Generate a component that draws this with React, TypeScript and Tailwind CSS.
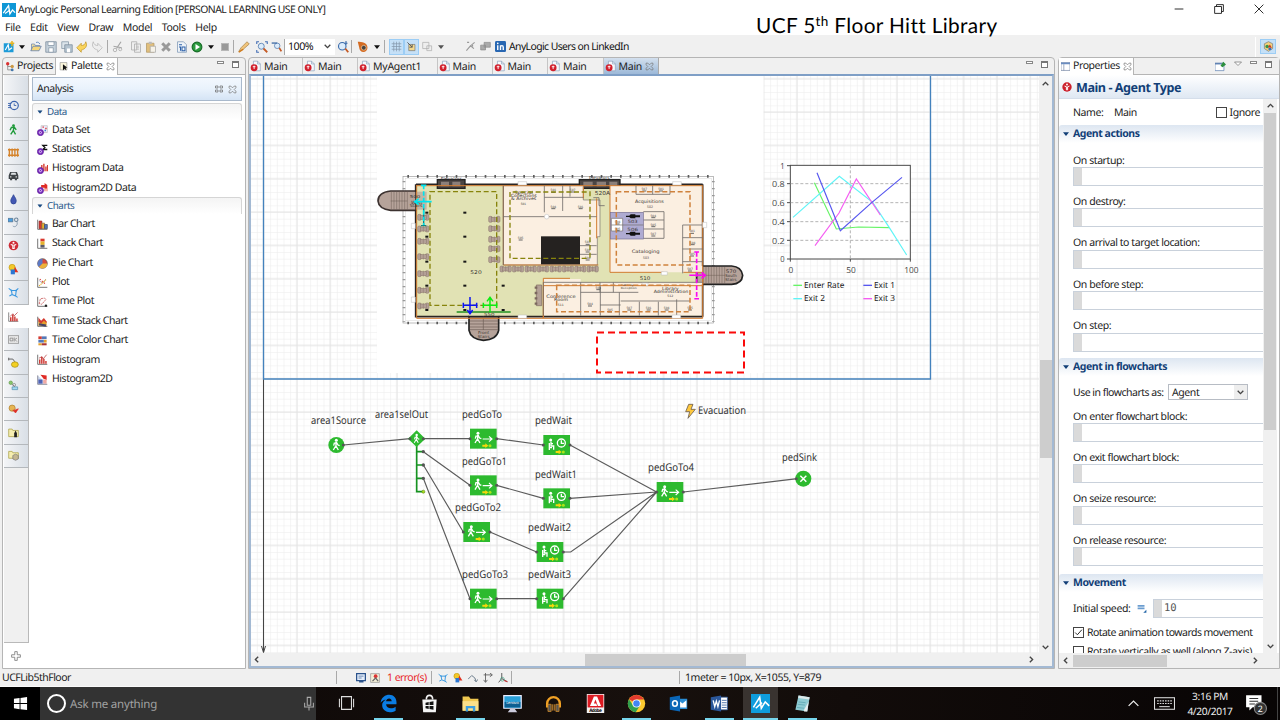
import React from "react";

type P = { children?: React.ReactNode; className?: string };

/* ---------- small drawings ---------- */
const Ic = ({ children, className = "w-[11px] h-[11px]" }: P) => (
  <svg viewBox="0 0 16 16" className={"shrink-0 " + className} fill="none">{children}</svg>
);

/* One line of interface text, nudged onto the row's baseline. */
const T = ({ children, className = "" }: P) => <span className={"block pt-[2px] whitespace-nowrap " + className}>{children}</span>;

const Logo = ({ className = "w-[14px] h-[14px]" }: P) => (
  <Ic className={className}>
    <rect width="16" height="16" fill="#0e97d6" />
    <path d="M1.500 11.500L7.500 3l1.500 9.500L12 8l3 3" stroke="#fff" strokeWidth="1.500" />
    <path d="M3.500 12L9 8" stroke="#fff" strokeWidth="1.300" />
  </Ic>
);

const CloseX = () => (
  <Ic className="w-[9px] h-[9px]">
    <path d="M2 2h3l3 3 3-3h3v3l-3 3 3 3v3h-3l-3-3-3 3H2v-3l3-3-3-3z" stroke="#777" strokeWidth="1.3" />
  </Ic>
);

const Err = () => (
  <Ic className="w-[10px] h-[10px]">
    <circle cx="8" cy="8" r="7.5" fill="#cc1f2b" />
    <circle cx="8" cy="4" r="1.5" fill="#fff" />
    <path d="M4 6.5l3 1v5h2v-5l3-1" stroke="#fff" strokeWidth="1.6" />
  </Ic>
);

const TabIcon = () => (
  <Ic className="w-[11px] h-[12px]">
    <path d="M5 1h6l4 4v10H5z" fill="#f4f8fc" stroke="#8da2ba" />
    <path d="M11 1v4h4" stroke="#8da2ba" />
    <circle cx="6" cy="10.5" r="5" fill="#d21f2c" />
    <path d="M6 7.5v5M4 9h4" stroke="#fff" strokeWidth="1.3" />
  </Ic>
);

const MinMax = () => (
  <div className="flex items-start gap-[8px]">
    <div className="w-[7px] h-[3px] border border-[#888] bg-white" />
    <div className="w-[7px] h-[7px] border border-[#777] border-t-2 bg-white" />
  </div>
);

const Caret = ({ className = "" }: P) => (
  <svg viewBox="0 0 8 5" className={"w-[6px] h-[4px] shrink-0 " + className}><path d="M0 0h8L4 5z" fill="currentColor" /></svg>
);

const Chev = ({ d }: { d: string }) => (
  <Ic className="w-[9px] h-[9px]"><path d={d} stroke="#444" strokeWidth="2.4" /></Ic>
);
const UP = "M3 11l5-5 5 5", DOWN = "M3 5l5 5 5-5", LEFT = "M11 3L6 8l5 5", RIGHT = "M5 3l5 5-5 5";

/* ---------- title, menu and tool bars ---------- */
const Sep = () => <div className="w-px h-[13px] bg-[#a9a9a9] shrink-0" />;

const B = ({ w, children, className = "" }: { w: string } & P) => (
  <div className={"flex items-center justify-center shrink-0 h-[16px] " + w + " " + className}>{children}</div>
);

const I12 = "w-[12px] h-[12px]";

function Toolbar() {
  return (
    <div className="h-[22px] bg-[#f0f0f0] flex items-center pl-[1px] pt-[1px] text-[#111]">
      <B w="w-[15px]"><Ic className={I12}><rect x="1" y="3" width="13" height="12" fill="#1d9bd8" /><path d="M3 12l4-7 1 7 4-3" stroke="#fff" strokeWidth="1.5" /><path d="M12 0v7M9 3h6" stroke="#e6b422" strokeWidth="2" /></Ic></B>
      <B w="w-[12px]"><Caret /></B>
      <B w="w-[15px]"><Ic className={I12}><path d="M2 13V4h4l1 2h6v2" fill="#f7e3a0" stroke="#6a86b0" /><path d="M1 13l3-6h11l-3 6z" fill="#f5d67a" stroke="#5b7eb5" /><path d="M8 2c3-1 4 0 5 2" stroke="#3a6db5" /></Ic></B>
      <B w="w-[16px]"><Ic className={I12}><path d="M1 1h14v14H1z" fill="#c4d0da" stroke="#7c8c9c" /><path d="M4 1h8v5H4zM5 9h6v6H5z" fill="#fff" stroke="#8394a4" /></Ic></B>
      <B w="w-[15px]"><Ic className={I12}><path d="M1 1h9v9H1z" fill="#dce4ea" stroke="#8394a4" /><path d="M5 5h10v10H5z" fill="#b5c4d0" stroke="#7c8c9c" /><path d="M8 10h4v5H8z" fill="#fff" /></Ic></B>
      <B w="w-[15px]"><Ic className={I12}><path d="M1 9l6-6v3c3 0 5-1 6-5 3 6-1 10-6 11v3z" fill="#fad45c" stroke="#c49a2c" /></Ic></B>
      <B w="w-[15px]"><Ic className={I12}><path d="M15 9L9 3v3C6 6 4 5 3 1c-3 6 1 10 6 11v3z" fill="#eee" stroke="#b5b5b5" /></Ic></B>
      <div className="w-[3px]" /><Sep />
      <B w="w-[20px]"><Ic className={I12}><path d="M12 1L6 10M2 7l11 2" stroke="#a5a5a5" strokeWidth="1.6" /><circle cx="4" cy="12" r="2.3" stroke="#a5a5a5" /><circle cx="11" cy="11" r="2" stroke="#a5a5a5" /></Ic></B>
      <B w="w-[15px]"><Ic className={I12}><path d="M2 1h7v11H2zM6 4h8v11H6z" fill="#eee" stroke="#aaa" /><path d="M8 7h4M8 9h4M8 11h4" stroke="#bbb" /></Ic></B>
      <B w="w-[15px]"><Ic className={I12}><path d="M2 3h10v12H2z" fill="#e1bf7c" stroke="#b39a68" /><path d="M5 1h4v3H5z" fill="#bbb" /><path d="M7 7h7v8H7z" fill="#f6f2e8" stroke="#aaa" /></Ic></B>
      <B w="w-[16px]"><Ic className={I12}><path d="M3 3l10 10M13 3L3 13" stroke="#999" strokeWidth="4" /></Ic></B>
      <B w="w-[15px]"><Ic className={I12}><path d="M2 1h8l4 4v10H2z" fill="#eef3f8" stroke="#7e95b5" /><path d="M4 8h2v5M8 8h4v5H8zM4 5h4" stroke="#2b5fa8" strokeWidth="1.4" /></Ic></B>
      <B w="w-[16px]"><Ic className={I12}><circle cx="8" cy="8" r="6.500" fill="#2c9b3e" stroke="#176b27" strokeWidth="1.500" /><path d="M6 4l6 4-6 4z" fill="#fff" /></Ic></B>
      <B w="w-[12px]"><Caret /></B>
      <B w="w-[16px]"><div className="w-[8px] h-[8px] bg-[#999] border border-[#b7b7b7]" /></B>
      <Sep />
      <B w="w-[20px]"><Ic className={I12}><path d="M1 14l3-5 8-8 3 3-8 7z" fill="#f1c47b" stroke="#a88752" /><path d="M1 15l6-4" stroke="#d17918" strokeWidth="2" /></Ic></B>
      <B w="w-[15px]"><Ic className={I12}><path d="M1 4V1h3M12 1h3v3M1 12v3h3" stroke="#456fb5" strokeWidth="1.5" /><circle cx="7" cy="7" r="4" fill="#dcecfb" stroke="#4670a8" /><path d="M10 10l5 5" stroke="#c55a25" strokeWidth="2.4" /></Ic></B>
      <B w="w-[15px]"><Ic className="w-[11px] h-[11px]"><circle cx="9" cy="7" r="4" fill="#dcecfb" stroke="#4670a8" /><path d="M1 3h8" stroke="#4670a8" strokeWidth="2" /><path d="M12 10l3 5" stroke="#c55a25" strokeWidth="2.4" /></Ic></B>
      <div className="w-[51px] h-[16px] bg-white flex items-center justify-between pl-[3px] pr-[3px] text-[10.700px] tracking-[-0.550px] border-l border-[#aaa]"><T>100%</T><Chev d={DOWN} /></div>
      <B w="w-[16px]"><Ic className={I12}><circle cx="7" cy="7" r="5" fill="#dcecfb" stroke="#3b6cab" strokeWidth="1.5" /><path d="M11 10l4 5" stroke="#c55a25" strokeWidth="2.4" /><path d="M12 0v5M10 3h4" stroke="#3b6cab" strokeWidth="1.5" /></Ic></B>
      <Sep />
      <B w="w-[22px]"><Ic className={I12}><path d="M1 1c5 0 13 1 13 8a5.500 5.500 0 0 1-11 0z" fill="#d46b22" /><circle cx="9" cy="9" r="3.200" fill="#444" stroke="#f5c898" /></Ic></B>
      <B w="w-[6px]"><Caret /></B>
      <div className="w-[4px]" /><Sep />
      <div className="w-[4px]" />
      <B w="w-[15px]" className="bg-[#c5e0f7] border border-[#9ccdf5]"><Ic className="w-[11px] h-[11px]"><path d="M4 1v14M8 1v14M12 1v14M1 4h14M1 8h14M1 12h14" stroke="#8194a8" /></Ic></B>
      <B w="w-[15px]" className="bg-[#c5e0f7] border border-[#9ccdf5]"><Ic className="w-[11px] h-[11px]"><path d="M4 5h9v9H4z" fill="#f5d98c" stroke="#777" /><path d="M2 2l7 7M9 5v4H5" stroke="#555" strokeWidth="1.3" /></Ic></B>
      <B w="w-[16px]"><Ic className="w-[11px] h-[11px]"><path d="M1 2h9v9H1zM7 7h7v7H7z" stroke="#aaa" fill="#eee" /></Ic></B>
      <B w="w-[12px]"><Caret className="text-[#555]" /></B>
      <div className="w-[16px]" />
      <B w="w-[15px]"><Ic className="w-[11px] h-[11px]"><path d="M2 14l6-7 5 4M3 2h3M8 7l6-5M11 4v4" stroke="#999" strokeWidth="1.6" /></Ic></B>
      <B w="w-[15px]"><Ic className="w-[11px] h-[11px]"><path d="M6 2h9v7H6zM1 6h7v7H1z" fill="#aaa" stroke="#888" /></Ic></B>
      <B w="w-[15px]"><Ic className="w-[11px] h-[11px]"><rect width="16" height="16" rx="2" fill="#2867b2" /><path d="M4 6v7M8 13V6M8 9c0-3 4-3 4 0v4" stroke="#fff" strokeWidth="2" /><circle cx="4" cy="3.500" r="1.200" fill="#fff" /></Ic></B>
      <T className="text-[10.400px] tracking-[-0.580px] pl-[1px]">AnyLogic Users on LinkedIn</T>
      <div className="ml-auto mr-[4px] flex gap-[4px] items-center">
        <div className="w-px h-[20px] bg-white" />
        <div className="w-[16px] h-[15px] bg-[#c5e0f7] border border-[#9ccdf5] flex items-center justify-center">
          <Ic className="w-[11px] h-[11px]"><path d="M8 1l6 3v7l-6 4-6-4V4z" fill="#f4d17c" stroke="#777" /><circle cx="6" cy="8" r="2.500" fill="#36964c" /><path d="M7 9l3-4 3 5z" fill="#cd3824" /><path d="M8 10h4v3H8z" fill="#306fc3" /></Ic>
        </div>
      </div>
    </div>
  );
}

/* ---------- palette ---------- */
const sideIcons: React.ReactNode[] = [
  null,
  <><circle cx="9" cy="8" r="6" stroke="#3b63ad" strokeWidth="1.700" /><path d="M9 5v3h3M0 5h5M0 8h4M0 11h5" stroke="#3b63ad" strokeWidth="1.300" /></>,
  <><circle cx="8" cy="2.200" r="2" fill="#1f9a3a" /><path d="M8 4v6l3 5M8 9l-4 6M3 9l2-4 4-0.500 3 4" stroke="#1f9a3a" strokeWidth="2" /></>,
  <path d="M0 4h16M0 12h16M2 2v12M6 2v12M10 2v12M14 2v12" stroke="#d5832b" strokeWidth="2" />,
  <><path d="M1 8l2-5h10l2 5v5h-2v2h-3v-2H6v2H3v-2H1z" fill="#3f4448" /><path d="M4 7l1-3h6l1 3z" fill="#dfe3e6" /><path d="M3 10h2M11 10h2" stroke="#ddd" strokeWidth="1.500" /></>,
  <path d="M8 1c2 4 4 6 4 9a4 4.500 0 0 1-8 0c0-3 2-5 4-9z" fill="#4358b3" stroke="#27408f" />,
  <><path d="M0 2h7v5H0z" fill="#4b9fe0" stroke="#4f6b85" /><circle cx="12" cy="4" r="2.500" stroke="#6a8399" strokeWidth="1.500" /><path d="M13 7c2 5-3 9-6 6" stroke="#6a8399" /></>,
  <><circle cx="8" cy="8" r="7" fill="#cf2d37" /><circle cx="8" cy="4" r="1.500" fill="#fff" /><path d="M4 6.500l3 1v5h2v-5l3-1" stroke="#fff" strokeWidth="1.500" /></>,
  <><circle cx="6" cy="5" r="4.500" fill="#f3c92b" stroke="#c29a14" /><path d="M10 4l5 8H8z" fill="#e0301e" /><path d="M4 8h6v7H4z" fill="#2a76d2" /></>,
  <><path d="M1 2l4 3h7l3-3M5 5l1 6 5 2 1-8M6 11l-4 2M11 13l3 2" stroke="#3897e0" strokeWidth="1.500" /><path d="M4 4h2v2H4zM11 4h2v2h-2z" fill="#3897e0" /></>,
  <><path d="M1 2v13h14" stroke="#555" /><path d="M4 15V9M7 15V5M10 15V8M13 15v-4" stroke="#cc2f2a" strokeWidth="2" /><path d="M3 8l4-4 2 3 5-5" stroke="#b03030" /></>,
  <><rect x="0.500" y="2.500" width="15" height="11" fill="#e8e8e8" stroke="#888" /><path d="M3 6h4v4H3zM9 5v6M13 6l-3 2 3 3" stroke="#777" /></>,
  <><path d="M1 1v4M1 3h6l3 4" stroke="#555" strokeWidth="1.300" /><ellipse cx="10" cy="11" rx="5" ry="4" fill="#f3d023" stroke="#a38a13" /></>,
  <><circle cx="4" cy="4" r="2.500" fill="#8bc76f" stroke="#5f9a45" /><path d="M6 6l4 4" stroke="#666" /><path d="M6 10h8v4H6z" fill="#a3d9f2" stroke="#508fae" /><circle cx="9" cy="7" r="2" stroke="#777" /></>,
  <><circle cx="6" cy="6" r="4.500" fill="#e6b554" stroke="#ad7f2b" /><path d="M7 9l4 4 4-6-3 1-2 1z" fill="#dd2f27" stroke="#dd2f27" /></>,
  <><path d="M1 3h5l1 2h8v9H1z" fill="#f6eeb0" stroke="#a59a3a" /><path d="M11 5l2 4v6h-4V9z" fill="#222" /></>,
  <><path d="M1 2h5l1 2h8v8H1z" fill="#f6eeb0" stroke="#a59a3a" /><path d="M11 6l4 2v5l-4 2-4-2V8z" fill="#c4b691" stroke="#777" /></>,
];

const ball = <circle cx="5" cy="11" r="4.500" fill="#7a2cc0" stroke="#5a1d94" />;
const hole = <circle cx="5" cy="11" r="1.600" stroke="#fff" />;
const axes = <path d="M1 1v14h14" stroke="#666" strokeWidth="1.300" />;
const dataItems: [string, React.ReactNode][] = [
  ["Data Set", <><path d="M6 1h9v10H6z" fill="#eef" stroke="#bbb" /><path d="M8 3h2M12 5h2" stroke="#d33" strokeWidth="2" /><path d="M11 8h2" stroke="#37c" strokeWidth="2" />{ball}{hole}</>],
  ["Statistics", <><path d="M15 2H8.500l3 3-3 3H15" stroke="#111" strokeWidth="1.900" />{ball}{hole}</>],
  ["Histogram Data", <><path d="M7 8V3M10 12V1M13 12V5M15.500 12V3" stroke="#d43a30" strokeWidth="2" />{ball}{hole}</>],
  ["Histogram2D Data", <><path d="M6 3h5V0l4 3v9l-4-2V7H6z" fill="#e02b25" /><path d="M10 8h5v4h-5z" fill="#f6b4a8" />{ball}{hole}</>],
];
const chartItems: [string, React.ReactNode][] = [
  ["Bar Chart", <>{axes}<path d="M3 3h4v11H3z" fill="#d9382e" stroke="#822" /><path d="M7 6h4v8H7z" fill="#e5b22c" stroke="#864" /><path d="M11 8h4v6h-4z" fill="#5478b8" stroke="#346" /></>],
  ["Stack Chart", <>{axes}<path d="M5 1h6v4H5z" fill="#d9382e" /><path d="M5 5h6v5H5z" fill="#e5b22c" /><path d="M5 10h6v4H5z" fill="#5a5a6a" /></>],
  ["Pie Chart", <><circle cx="8" cy="8" r="7" fill="#d94a3a" stroke="#555" /><path d="M8 8V1a7 7 0 0 0-5 12z" fill="#5c7ac4" /><path d="M8 8L3 13a7 7 0 0 0 12-5z" fill="#ecb23a" /></>],
  ["Plot", <>{axes}<path d="M3 5l5 4 5-6" stroke="#88a" /><path d="M3 13l10-9" stroke="#e5b22c" strokeWidth="1.500" strokeDasharray="2 1" /><path d="M4 3l9 8" stroke="#d33" strokeWidth="1.500" strokeDasharray="2 2" /></>],
  ["Time Plot", <>{axes}<path d="M3 11l2-7 6-1 2 2-6 7z" stroke="#c66" strokeDasharray="3 1" strokeWidth="1.300" /><circle cx="13" cy="14" r="1.800" fill="#222" /></>],
  ["Time Stack Chart", <><path d="M2 14V6l4 3 4-4 4 3v6z" fill="#e5a12c" /><path d="M2 2l4 5 4-4 4 5v2l-4-3-4 4-4-3z" fill="#d43a30" />{axes}<path d="M3 12l10 2" stroke="#446" strokeWidth="3" /></>],
  ["Time Color Chart", <><path d="M2 2h5v4H2z" fill="#d43a30" /><path d="M7 2h7v4H7z" fill="#5478b8" /><path d="M2 7h8v4H2z" fill="#5478b8" /><path d="M10 7h4v4h-4z" fill="#e5a12c" /><path d="M2 12h5v3H2z" fill="#e5a12c" /><path d="M7 12h7v3H7z" fill="#a33" /></>],
  ["Histogram", <>{axes}<path d="M4 14V8M7 14V4M10 14V7M13 14v-4" stroke="#cc2f2a" strokeWidth="2" /><path d="M3 6l4-2 2 3 5-6" stroke="#b03030" /></>],
  ["Histogram2D", <><path d="M1 2v13h14" fill="#cdd8ee" stroke="#667" /><path d="M2 8h6v6H2z" fill="#5063b5" /><path d="M5 1l9 1v7l-5-3z" fill="#e02b25" /><path d="M9 8h5v6H9z" fill="#f1a9a3" /></>],
];

const PalSection = ({ title, items }: { title: string; items: [string, React.ReactNode][] }) => (
  <div>
    <div className="h-[16.900px] rounded-t-[3px] border border-b-0 border-[#d5d5d5] bg-linear-to-b from-[#f4f4f4] to-white flex items-center pl-[4px] gap-[4px] text-[9.800px] text-[#2c5a8c] tracking-[-0.450px]">
      <Caret className="text-[#1b4b82] scale-90" />{title}
    </div>
    {items.map(([t, ic]) => (
      <div key={t} className="h-[19.370px] flex items-center gap-[4px] pl-[5px] text-[10.500px] tracking-[-0.460px] text-[#1c1c1c]">
        <Ic className="w-[11px] h-[11px] mt-[1px]">{ic}</Ic><T>{t}</T>
      </div>
    ))}
  </div>
);

function Palette() {
  return (
    <div className="w-[244px] ml-[2px] flex flex-col border border-[#b5b5b5] rounded-t-[4px] bg-[#f0f0f0]">
      <div className="h-[17px] flex items-center text-[10.500px] tracking-[-0.400px] border-b border-[#b5b5b5]">
        <div className="w-[52px] flex items-center gap-[2px] pl-[3px]"><Ic className="w-[9px] h-[11px]"><path d="M3 3v11h7M3 8h6" stroke="#888" strokeWidth="1.500" /><circle cx="3" cy="3" r="3" fill="#d93030" /><circle cx="11" cy="8" r="3" fill="#c94" /><circle cx="11" cy="14" r="2.500" fill="#47a" /></Ic><T>Projects</T></div>
        <div className="w-[63px] h-[17px] bg-white border-x border-[#b5b5b5] flex items-center gap-[3px] pl-[3px]"><Ic className="w-[9px] h-[11px]"><path d="M2 1h12v13H2z" fill="#fbf6dc" stroke="#888" /><path d="M7 4v11l3-3 3 3-1-5h3z" fill="#111" /></Ic><T>Palette</T><CloseX /></div>
        <div className="ml-auto mr-[6px] pb-[4px]"><MinMax /></div>
      </div>
      <div className="flex-1 flex bg-white pl-[1px] min-h-0">
        <div className="w-[25px] flex flex-col bg-white">
          <div className="flex-1 flex flex-col bg-[#f0f0f0] border-r border-[#b9b9b9] pt-[1px]">
            {sideIcons.map((ic, i) => (
              <div key={i} className={(i === 0 ? "h-[18.600px] " : "h-[23.330px] ") + (i === 10 ? "bg-white -mr-px " : "bg-linear-to-r from-[#f4f5f7] to-[#d9dfe6] border-b border-[#b4b8bc] ") + "flex items-center justify-center pr-[6px]"}>
                <Ic className="w-[11px] h-[11px]">{ic}</Ic>
              </div>
            ))}
          </div>
          <div className="h-[26px] flex items-center justify-center border-t border-[#b9b9b9] pr-[1px]"><Ic className="w-[10px] h-[10px]"><path d="M6 1h4v5h5v4h-5v5H6v-5H1V6h5z" stroke="#777" strokeWidth="1.300" /></Ic></div>
        </div>
        <div className="flex-1 flex flex-col pl-[3px] pr-[3px] pt-[2px]">
          <div className="h-[24px] shrink-0 mb-[2px] border border-[#a9b9cc] bg-linear-to-b from-[#f3f8fe] via-[#e9f2fc] to-[#d5e4f5] flex items-center pl-[4px] pr-[4px] text-[10.500px] tracking-[-0.450px] text-[#1c1c1c]">
            <T>Analysis</T>
            <div className="ml-auto flex items-center gap-[5px]"><Ic className="w-[8px] h-[8px]"><path d="M1 2h5v4H1zM10 2h5v4h-5zM1 10h5v4H1zM10 10h5v4h-5z" stroke="#666" strokeWidth="1.400" /></Ic><CloseX /></div>
          </div>
          <PalSection title="Data" items={dataItems} />
          <PalSection title="Charts" items={chartItems} />
        </div>
      </div>
    </div>
  );
}

/* ---------- canvas ---------- */
const L = ({ x, y, w, t, s = 10.7, c = "#333" }: { x: number; y: number; w: number; t: string; s?: number; c?: string }) => (
  <text x={x} y={y} fontSize={s} fill={c} textLength={w} lengthAdjust="spacingAndGlyphs">{t}</text>
);

const desks = (pts: number[][]) => pts.map(([x, y], i) => (
  <g key={i} transform={`translate(${x} ${y})`} fill="#b3a096" stroke="#8a766c" strokeWidth="1.500">
    <rect x="-17" y="-9" width="11" height="18" rx="4" /><rect x="6" y="-9" width="11" height="18" rx="4" /><rect x="-9" y="-6" width="18" height="12" />
    <path d="M0-9V9" />
  </g>
));

const pt = (x: number, y: number, w: number, t: string, s = 14) => (
  <text key={t + x + y} x={x} y={y} fontSize={s} textLength={w} lengthAdjust="spacingAndGlyphs" fill="#3a3532" textAnchor="middle">{t}</text>
);

function FloorPlan() {
  return (
    <g strokeLinejoin="miter">
      <g transform="translate(370 165) scale(0.33333)" fill="none">
        <rect x="99" y="34" width="932" height="440" stroke="#9b9b9b" strokeWidth="2" />
        <rect x="106" y="41" width="918" height="426" stroke="#d8d8d8" strokeWidth="1.500" />
        <path d="M112 34H1020M112 474H1020" stroke="#5b5b5b" strokeWidth="8" strokeDasharray="5 24" />
        <path d="M102 48V470M1030 48V470" stroke="#999" strokeWidth="8" strokeDasharray="4 17" />
        <rect x="138" y="60" width="860" height="395" fill="#e1e2b4" />
        <path d="M138 78H62Q24 82 24 108Q26 132 62 136H138z" fill="#b6a39a" stroke="#3c3230" strokeWidth="5" />
        <path d="M138 80h32v54h-32z" fill="#c3b6a4" />
        <path d="M62 108h50M64 80v54M72 80v54M80 80v54M88 80v54M96 80v54M104 80v54M112 80v54" stroke="#6c5d56" strokeWidth="1.500" />
        <path d="M297 455V496Q302 522 340 526Q380 524 386 496V455z" fill="#b6a39a" stroke="#222" strokeWidth="5" />
        <path d="M300 459H384M300 468H384M300 477H384M300 486H384M300 494H384M340 455v40" stroke="#6c5d56" strokeWidth="2" />
        <path d="M980 303H1085Q1114 305 1118 331Q1116 356 1085 358H980z" fill="#b6a39a" stroke="#222" strokeWidth="5" />
        <path d="M1000 306v50M1008 306v50M1016 306v50M1024 306v50M1032 306v50M1040 306v50M1048 306v50M1056 306v50M1064 306v50M980 331h85" stroke="#6c5d56" strokeWidth="1.500" />
        <rect x="202" y="44" width="83" height="26" fill="#4b4644" stroke="#222" strokeWidth="4" />
        <path d="M213 50h24v14h-24zM247 50h24v14h-24z" fill="#8b7f79" />
        <rect x="628" y="44" width="122" height="26" fill="#4b4644" stroke="#222" strokeWidth="4" />
        <path d="M640 50h28v14h-28zM680 50h28v14h-28zM718 50h24v14h-24z" fill="#8b7f79" />
        <path d="M400 62H640V105H690V215H682V300H400z" fill="#fbefe1" stroke="#74706b" strokeWidth="2" />
        <path d="M720 62H998V322H720z" fill="#fbefe1" />
        <path d="M520 342H632V352H998V452H520z" fill="#fbefe1" />
        <path d="M138 58H202M285 58H628M750 58H998M137 58V80M137 135V455H297M386 455H998M998 58V303M998 358V455" stroke="#2b2523" strokeWidth="5" />
        <path d="M138 62H400V300H685M720 62V322H880M940 322H998V362H520V460H140V62M400 62H998V460H520V340H600M640 65V100M680 100V220" stroke="#d27b30" strokeWidth="3" />
        <path d="M523 62V142M523 97H640M578 62V138M400 155H680M600 62V95M520 352H998M632 352V452M691 365V452M748 382V452M632 382H805M752 408H960M808 410V452M865 410V452M920 403V452M752 420H690M400 62v238" stroke="#716d6a" strokeWidth="2.500" />
        <path d="M798 62V88H900V62M848 62V88M820 140H882V220H820M820 165H882M820 192H882M998 180H938V325M938 218H998M938 252H998M938 290H998M625 242H680M625 268H680M670 98h17v24h17M520 352v100M690 382V352M730 352V382" stroke="#716d6a" strokeWidth="2.500" />
        <rect x="513" y="214" width="117" height="84" fill="#252220" />
        <rect x="722" y="142" width="98" height="80" fill="#afabd2" stroke="#766f91" strokeWidth="2" />
        <path d="M724 160h34v38h-34z" fill="#fff" stroke="#716d6a" strokeWidth="2" /><path d="M724 180h96" stroke="#716d6a" strokeWidth="2" />
        <path d="M768 152h10l4-4h14v3h14v6h-14v3h-14l-4-4h-10zM768 204h10l4-4h14v3h14v6h-14v3h-14l-4-4h-10z" fill="#111" />
        {desks([[160, 157], [160, 192], [160, 229], [160, 275], [160, 326], [160, 376], [160, 423], [373, 163], [373, 191], [373, 223], [373, 251], [373, 284], [407, 312], [444, 312], [482, 312], [519, 312], [557, 312], [594, 312], [631, 312], [668, 312]])}
        <path d="M499 360h16v62h-16z" fill="#b3a096" stroke="#7b675e" strokeWidth="2" />
        <path d="M494 368h8M494 384h8M494 400h8M494 416h8" stroke="#7b675e" strokeWidth="7" />
        {[[171, 143], [171, 215], [171, 290], [171, 362], [171, 435], [285, 143], [285, 215], [285, 290], [285, 362], [285, 435], [400, 362], [400, 435]].map(([x, y]) => <rect key={x + "-" + y} x={x - 5} y={y - 3} width="9" height="6" fill="#171717" />)}
        <g fill="#fff" stroke="#bbb" strokeWidth="1.500">
          <path d="M444 50h26v10h-26zM444 450h26v10h-26zM124 175h12v16h-12zM124 396h12v16h-12zM908 50h26v10h-26zM906 450h26v10h-26zM998 172h12v16h-12zM874 320h18v10h-18zM816 354h18v8h-18z" />
          <circle cx="530" cy="155" r="7" />
        </g>
        <g className="font-['DejaVu_Sans']">
          {[pt(135, 99, 32, "500", 12), pt(140, 116, 34, "West", 13), pt(138, 127, 38, "Stairs", 13), pt(244, 45, 64, "Elevators", 12), pt(688, 43, 62, "Elevators", 12), pt(318, 327, 34, "520", 15),
            pt(461, 86, 56, "Special", 13), pt(461, 95, 78, "Collections", 13), pt(461, 105, 76, "& Archives", 13), pt(460, 121, 16, "501", 9),
            pt(697, 90, 46, "520A", 16), pt(838, 113, 86, "Acquisitions", 14), pt(840, 128, 18, "502", 10), pt(827, 264, 84, "Cataloging", 14), pt(828, 282, 18, "503", 10),
            pt(788, 174, 30, "503", 13), pt(788, 197, 32, "506", 13), pt(825, 346, 32, "510", 15), pt(1083, 323, 32, "570", 14), pt(1083, 337, 34, "South", 12), pt(1083, 347, 34, "Stairs", 12),
            pt(573, 398, 88, "Conference", 14), pt(573, 409, 42, "Room", 13), pt(572, 423, 18, "511", 9), pt(901, 375, 50, "Library", 13), pt(903, 385, 104, "Administration", 13), pt(901, 395, 18, "512", 9),
            pt(773, 362, 38, "Library", 8), pt(776, 371, 48, "Reception", 8), pt(358, 452, 32, "550", 13), pt(341, 508, 34, "Front", 12), pt(341, 518, 36, "Stairs", 12)]}
          {[[550, 79], [550, 128], [452, 222], [608, 78], [632, 128], [743, 174], [743, 194], [823, 75], [873, 75], [850, 155], [850, 182], [850, 210], [966, 202], [968, 236], [966, 270], [960, 315], [685, 371], [660, 420], [720, 438], [778, 432], [836, 432], [890, 432], [960, 432], [653, 235], [653, 258], [653, 282]].map(([x, y], i) => (
            <g key={i}><text x={x} y={y} fontSize="9" textAnchor="middle" fill="#444">{["501", "504", "505", "507"][i % 4]}</text><path d={`M${x - 6} ${y + 3}h12`} stroke="#666" strokeWidth="3" /></g>
          ))}
        </g>
        <path d="M180 80H380V421H180zM650 280H420V81H660V280" stroke="#87840c" strokeWidth="4" strokeDasharray="15 8" />
        <path d="M739 80H960V300H739zM560 361H960V440H560z" stroke="#cf823c" strokeWidth="4.500" strokeDasharray="15 8" />
        <path d="M260 441H422" stroke="#209020" strokeWidth="5" />
        <path d="M161 130V182M153 182h16" stroke="#168383" strokeWidth="4" />
        <path d="M161 60V180" stroke="#00e5ef" strokeWidth="5" strokeDasharray="13 6" /><path d="M153 61h16M185 110H136M146 101l-12 9 12 9" stroke="#00e5ef" strokeWidth="5" />
        <path d="M280 421h40M280 413v16M320 413v16M300 396V446M292 435l8 11 8-11" stroke="#0b13f2" strokeWidth="4.500" />
        <path d="M340 421h40M340 413v16M380 413v16M360 442V397M351 409l9-12 9 12" stroke="#0bec10" strokeWidth="4.500" />
        <path d="M980 261V401" stroke="#fa08f2" strokeWidth="5" strokeDasharray="14 6" /><path d="M973 261h14M973 401h14M958 331h48M995 322l11 9-11 9" stroke="#fa08f2" strokeWidth="4.500" />
      </g>
      <rect x="597" y="332.500" width="147" height="40" fill="none" stroke="#fa0a0a" strokeWidth="2" strokeDasharray="7 4" />
    </g>
  );
}

function Chart() {
  const ys = [47, 101, 158, 215, 271, 327];
  return (
    <g transform="translate(750 150) scale(0.33333)" fill="none" strokeWidth="3">
      <rect x="121" y="46" width="360" height="281" fill="#fff" stroke="#4a4a4a" />
      <path d="M121 101H481M121 158H481M121 215H481M121 271H481M301 46V327" stroke="#a5a5a5" strokeDasharray="9 6" strokeWidth="2.500" />
      <path d="M111 47h10M111 101h10M111 158h10M111 215h10M111 271h10M111 327h10M121 327v8M301 327v8M481 327v8" stroke="#4a4a4a" />
      <path d="M193 98L259 237L325 231L418 233" stroke="#66f466" strokeWidth="3.500" />
      <path d="M129 202L268 79L368 157L418 233L470 315" stroke="#5ff4f7" strokeWidth="3.500" />
      <path d="M195 287L267 189L319 87L391 195" stroke="#f55df2" strokeWidth="3.500" />
      <path d="M201 68L271 242L365 158L456 82" stroke="#5757ef" strokeWidth="3.500" />
      <g fontFamily="Open Sans, Noto Sans, sans-serif" fontSize="25" fill="#444">
        {["1", "0.8", "0.6", "0.4", "0.2", "0"].map((t, i) => <text key={t} x="104" y={ys[i] + 10} textAnchor="end" textLength={t.length > 1 ? 38 : 13} lengthAdjust="spacingAndGlyphs">{t}</text>)}
        <text x="123" y="368" textAnchor="middle">0</text><text x="303" y="368" textAnchor="middle">50</text><text x="484" y="368" textAnchor="middle">100</text>
      </g>
      <path d="M130 406h26" stroke="#66f466" strokeWidth="4" /><path d="M340 406h26" stroke="#5757ef" strokeWidth="4" /><path d="M130 446h26" stroke="#5ff4f7" strokeWidth="4" /><path d="M340 446h26" stroke="#f55df2" strokeWidth="4" />
      <g fontSize="25" fill="#222">
        <text x="162" y="414" textLength="121" lengthAdjust="spacingAndGlyphs">Enter Rate</text><text x="372" y="414" textLength="63" lengthAdjust="spacingAndGlyphs">Exit 1</text>
        <text x="162" y="454" textLength="63" lengthAdjust="spacingAndGlyphs">Exit 2</text><text x="372" y="454" textLength="63" lengthAdjust="spacingAndGlyphs">Exit 3</text>
      </g>
    </g>
  );
}

const walker = <g stroke="#fff" strokeWidth="4" fill="none"><circle cx="0" cy="-15" r="4.500" fill="#fff" stroke="none" /><path d="M-1-11L-1 2L6 14M-2 2L-9 14M-8 1L-6-7L1-8L5-1L10 1" /></g>;

const Block = ({ x, y, wait }: { x: number; y: number; wait?: boolean }) => (
  <g transform={`translate(${x} ${y})`}>
    <rect x="0" y="0" width="80" height="60" fill="#2dba2f" />
    {wait ? (
      <g stroke="#fff" strokeWidth="4" fill="none"><circle cx="22" cy="15" r="4.500" fill="#fff" stroke="none" /><path d="M23 20v13h8v11M29 26h-6M18 24v14h8M18 38v7" /><circle cx="54" cy="24" r="12" /><path d="M54 16v9h8" /></g>
    ) : (
      <><g transform="translate(24 29)">{walker}</g><path d="M38 31h26M57 23l9 8-9 8" stroke="#fff" strokeWidth="3.500" fill="none" /></>
    )}
    <path d="M37 48h9v-4l9 7-9 7v-4h-9z" fill="#f7d70c" /><circle cx="60" cy="51" r="4.500" fill="#a9e519" />
    <circle cx="0" cy="30" r="4.500" fill="#555" /><circle cx="80" cy="30" r="4.500" fill="#555" />
  </g>
);

function Flow() {
  return (
    <>
      <g transform="translate(300 399.670) scale(0.33333)" fill="none">
        <path d="M130 136L330 117M370 117H510M590 117L730 136M370 156L510 257M590 257L730 296M370 196L490 397M570 397L710 457M370 236L510 597M590 597H710M810 136L1070 277M810 296L1070 277M790 457H812L1070 277M790 597L1070 277M1150 277L1492 237" stroke="#5c5c5c" strokeWidth="3.500" />
        <path d="M350 136V276H370M350 156h20M350 196h20M350 236h20" stroke="#169321" strokeWidth="5" />
        <circle cx="370" cy="156" r="5" fill="#555" /><circle cx="370" cy="196" r="5" fill="#555" /><circle cx="370" cy="236" r="5" fill="#555" /><circle cx="370" cy="276" r="4.500" fill="#a5e31d" stroke="#678a18" strokeWidth="2" />
        <circle cx="109" cy="136" r="24" fill="#2dba2f" /><g transform="translate(109 137)">{walker}</g><circle cx="130" cy="136" r="4.500" fill="#555" />
        <path d="M350 92L376 117L350 142L324 117z" fill="#2dba2f" /><g transform="translate(350 118) scale(.8)">{walker}</g><circle cx="330" cy="117" r="4.500" fill="#555" /><circle cx="370" cy="117" r="4.500" fill="#555" />
        <Block x={510} y={87} /><Block x={510} y={227} /><Block x={490} y={367} /><Block x={510} y={567} />
        <Block x={730} y={106} wait /><Block x={730} y={266} wait /><Block x={710} y={427} wait /><Block x={710} y={567} wait />
        <Block x={1070} y={247} />
        <circle cx="1510" cy="237" r="24" fill="#2dba2f" /><path d="M1501 228l18 18M1519 228l-18 18" stroke="#fff" strokeWidth="4.500" /><circle cx="1489" cy="237" r="4.500" fill="#555" />
        <path d="M1166 14h13l-6 15h13l-22 27 5-20h-12z" fill="#ffc83c" stroke="#6b5e50" strokeWidth="2.500" />
      </g>
      <L x={311} y={424} w={55} t="area1Source" /><L x={375} y={417.500} w={53} t="area1selOut" />
      <L x={462} y={417.500} w={40} t="pedGoTo" /><L x={462} y={464.500} w={45} t="pedGoTo1" /><L x={455} y={511} w={46} t="pedGoTo2" /><L x={462} y={577.500} w={46} t="pedGoTo3" />
      <L x={535} y={424} w={37} t="pedWait" /><L x={535} y={477.500} w={42} t="pedWait1" /><L x={528} y={531} w={43} t="pedWait2" /><L x={528} y={577.500} w={43} t="pedWait3" />
      <L x={648} y={471} w={46} t="pedGoTo4" /><L x={782} y={461} w={35} t="pedSink" /><L x={698} y={414} w={48} t="Evacuation" />
    </>
  );
}

function Canvas() {
  return (
    <svg viewBox="251 76 788 577" className="w-[788px] h-[577px] block shrink-0" fontFamily="Noto Sans, sans-serif">
      <defs>
        <pattern id="minor" x="263.500" y="378.700" width="6.6667" height="6.6667" patternUnits="userSpaceOnUse"><path d="M0 0H6.667M0 0V6.667" stroke="#ececec" strokeWidth="1.100" /></pattern>
        <pattern id="major" x="246.830" y="362.030" width="33.3333" height="33.3333" patternUnits="userSpaceOnUse"><path d="M0 16.670H33.333M16.670 0V33.333" stroke="#e4e4e4" strokeWidth="1" /></pattern>
      </defs>
      <rect x="251" y="76" width="788" height="577" fill="#fff" />
      <rect x="251" y="76" width="788" height="577" fill="url(#minor)" />
      <rect x="251" y="76" width="788" height="577" fill="url(#major)" />
      <rect x="377" y="76" width="386.500" height="297" fill="#fff" />
      <path d="M263.500 378V652M261.500 646l2 6.500 2-6.500" stroke="#444" fill="none" />
      <path d="M263.500 76V379H930.500V76" stroke="#4482bd" strokeWidth="1.300" fill="none" />
      <FloorPlan /><Chart /><Flow />
    </svg>
  );
}

function Editor() {
  const tabs: [string, string][] = [["Main", "w-[54px]"], ["Main", "w-[55px]"], ["MyAgent1", "w-[79.500px]"], ["Main", "w-[55px]"], ["Main", "w-[55.500px]"], ["Main", "w-[55.500px]"]];
  return (
    <div className="w-[807px] ml-[2px] flex flex-col border border-[#b5b5b5] rounded-t-[4px] bg-[#f0f0f0]">
      <div className="h-[16px] flex items-center text-[10.500px] tracking-[-0.250px]">
        {tabs.map(([t, w], i) => <div key={i} className={"h-full flex items-center gap-[3px] pl-[1px] border-r border-[#c5c5c5] " + w}><TabIcon /><T className="pt-[3px]">{t}</T></div>)}
        <div className="h-full w-[55px] flex items-center gap-[3px] pl-[1px] bg-linear-to-b from-[#d3e0ee] to-[#9db9d8] border-r border-[#aaa]"><TabIcon /><T className="pt-[3px]">Main</T><CloseX /></div>
        <div className="ml-auto mr-[6px] pb-[4px]"><MinMax /></div>
      </div>
      <div className="flex-1 flex flex-col border-2 border-[#a3b9d3] border-t-[#7f9fc6] min-h-0">
        <div className="flex h-[577px]">
          <Canvas />
          <div className="flex-1 bg-[#f0f0f0] flex flex-col items-center pt-[3px] pb-[1px]">
            <Chev d={UP} /><div className="mt-[272px] w-[12px] h-[98px] bg-[#cdcdcd]" /><div className="mt-auto"><Chev d={DOWN} /></div>
          </div>
        </div>
        <div className="flex-1 bg-[#f0f0f0] flex items-center"><div className="w-[10px] pl-[1px]"><Chev d={LEFT} /></div><div className="ml-[324px] w-[161px] h-[12px] bg-[#cdcdcd]" /><div className="ml-[281px]"><Chev d={RIGHT} /></div></div>
      </div>
    </div>
  );
}

/* ---------- properties ---------- */
const Head = ({ children, className = "" }: P) => (
  <div className={"h-[18px] shrink-0 bg-linear-to-b from-[#dde6f1] to-white rounded-tl-[3px] flex items-center gap-[4px] pl-[4px] font-bold text-[10.500px] tracking-[-0.450px] text-[#123f77] " + className}>
    <Caret /><T>{children}</T>
  </div>
);
const Field = ({ label }: { label: string }) => (
  <div className="h-[41.400px] shrink-0 pl-[14px]">
    <div className="h-[14px] flex items-center"><T className="pt-[3px]">{label}</T></div>
    <div className="h-[19px] border border-r-0 border-[#c9d1db] bg-white"><div className="w-[8px] h-full bg-[#dadada]" /></div>
  </div>
);
const Box = ({ on }: { on?: boolean }) => (
  <div className="w-[11px] h-[11px] border border-[#444] bg-white flex items-center justify-center shrink-0">{on && <Ic className="w-[9px] h-[9px]"><path d="M2 8l4 4 8-9" stroke="#222" strokeWidth="1.700" /></Ic>}</div>
);

function Properties() {
  return (
    <div className="w-[222px] ml-[3px] flex flex-col border border-[#b5b5b5] rounded-t-[4px] bg-white text-[10.500px] text-[#222] tracking-[-0.420px]">
      <div className="h-[17px] flex items-center bg-[#f0f0f0] border-b border-[#b5b5b5] shrink-0">
        <div className="w-[75px] h-[17px] bg-white border-r border-[#b5b5b5] flex items-center gap-[3px] pl-[2px]"><Ic className="w-[9px] h-[9px]"><path d="M0 1h16v14H0z" fill="#fff" stroke="#556b90" /><path d="M0 1h16v3H0z" fill="#6a8cc0" /><path d="M5 4v11" stroke="#556b90" /></Ic><T>Properties</T><CloseX /></div>
        <div className="ml-auto mr-[7px] flex items-start gap-[8px]"><Ic className="w-[11px] h-[11px]"><path d="M0 3h13v11H0z" fill="#fff" stroke="#5b7eb0" /><path d="M0 3h10v2H0z" fill="#5b7eb0" /><path d="M8 7l4-6 4 4-5 4z" fill="#2c8f3f" /></Ic><Ic className="w-[8px] h-[8px]"><path d="M1 2h14l-7 7z" stroke="#777" strokeWidth="1.500" fill="#fff" /></Ic><MinMax /></div>
      </div>
      <div className="h-[24px] shrink-0 flex items-center gap-[4px] pl-[3px] bg-linear-to-b from-white to-[#dfe8f3] border-b border-[#d5deea] font-bold text-[12.600px] tracking-[-0.450px] text-[#123f77]"><Err /><T className="pt-[4px]">Main - Agent Type</T></div>
      <div className="flex h-[554px]">
        <div className="w-[204px] shrink-0 overflow-hidden flex flex-col">
          <div className="h-[26px] shrink-0 flex items-center pl-[14px] pt-px"><T className="w-[41px]">Name:</T><T>Main</T><div className="ml-auto mr-[3px] flex items-center gap-[3px]"><Box /><T>Ignore</T></div></div>
          <Head className="mb-[10px]">Agent actions</Head>
          {["On startup:", "On destroy:", "On arrival to target location:", "On before step:", "On step:"].map((l) => <Field key={l} label={l} />)}
          <Head className="-mt-[2px]">Agent in flowcharts</Head>
          <div className="h-[33px] shrink-0 flex items-center pl-[14px]"><T className="w-[95px] tracking-[-0.500px]">Use in flowcharts as:</T><div className="w-[80px] h-[16px] border border-[#b7bcc4] bg-white flex items-center justify-between pl-[3px]"><T>Agent</T><div className="bg-[#eee] h-full w-[13px] flex items-center justify-center"><Chev d={DOWN} /></div></div></div>
          {["On enter flowchart block:", "On exit flowchart block:", "On seize resource:", "On release resource:"].map((l) => <Field key={l} label={l} />)}
          <Head className="-mt-[1px]">Movement</Head>
          <div className="h-[34px] shrink-0 flex items-center pl-[14px]"><T className="w-[64px]">Initial speed:</T><Ic className="w-[10px] h-[10px]"><path d="M1 3h11M1 7h11" stroke="#6b9dd0" strokeWidth="2.500" /><path d="M15 9v5h-5z" fill="#2467a8" /></Ic><div className="ml-[6px] flex-1 h-[19px] border border-r-0 border-[#c9d1db] flex items-center"><div className="w-[8px] h-full bg-[#dadada] mr-[2px]" /><span className="font-['DejaVu_Sans_Mono'] text-[10.500px] tracking-normal text-[#555]">10</span></div></div>
          <div className="h-[14px] shrink-0 flex items-center gap-[3px] pl-[14px] tracking-[-0.550px]"><Box on /><T>Rotate animation towards movement</T></div>
          <div className="h-[24px] shrink-0 flex items-center gap-[3px] pl-[14px] tracking-[-0.450px]"><Box /><T>Rotate vertically as well (along Z-axis)</T></div>
        </div>
        <div className="w-[14px] bg-[#f0f0f0] flex flex-col items-center py-[2px]"><Chev d={UP} /><div className="mt-[3px] w-[12px] h-[317px] bg-[#cdcdcd]" /><div className="mt-auto"><Chev d={DOWN} /></div></div>
      </div>
      <div className="flex-1 bg-[#f0f0f0] flex items-center"><div className="pl-[2px] w-[14px]"><Chev d={LEFT} /></div><div className="w-[94px] h-[12px] bg-[#cdcdcd]" /><div className="ml-[84px]"><Chev d={RIGHT} /></div></div>
    </div>
  );
}

/* ---------- status and task bar ---------- */
function Status() {
  return (
    <div className="h-[18px] bg-[#f0f0f0] border-b border-[#fafafa] flex items-center text-[10.500px] tracking-[-0.330px] text-[#222]">
      <div className="w-[336px] pl-[2px] tracking-[-0.500px]"><T>UCFLib5thFloor</T></div><Sep />
      <div className="w-[94px] flex items-center gap-[4px] pl-[19px] text-[#e8262a]">
        <Ic className="w-[10px] h-[10px]"><path d="M1 1h14v11H1zM5 14h7" stroke="#2b538c" strokeWidth="2" fill="#e5eefb" /><path d="M4 5h8M4 8h5" stroke="#2b538c" /></Ic>
        <Ic className="w-[10px] h-[10px]"><path d="M1 1h14v14H1z" fill="#f4efd8" stroke="#888" /><circle cx="9" cy="5" r="3" fill="#d33" /><path d="M4 13l5-5 4 5" stroke="#666" strokeWidth="2" /></Ic>
        <T className="pl-[3px] tracking-[-0.550px]">1 error(s)</T>
      </div><Sep />
      <div className="w-[79px] flex items-center gap-[5px] pl-[6px]">
        <Ic className="w-[10px] h-[10px]">{sideIcons[9]}</Ic><Ic className="w-[10px] h-[10px]">{sideIcons[8]}</Ic>
        <Ic className="w-[10px] h-[10px]"><path d="M0 10l6-6 5 4 2 6M10 11l3 3 3-4" stroke="#678" strokeWidth="1.500" /></Ic>
        <Ic className="w-[10px] h-[10px]"><path d="M1 3h13M4 0v14M11 0l4 3-4 3M1 11l3 4 3-4" stroke="#555" strokeWidth="1.300" /></Ic>
        <Ic className="w-[10px] h-[10px]"><path d="M6 0v9l-5 6M6 9l9 5" stroke="#555" strokeWidth="1.500" /><circle cx="7" cy="10" r="3" stroke="#397" /><path d="M10 12l5 2" stroke="#c33" strokeWidth="2" /></Ic>
      </div><Sep />
      <div className="w-[167px]" /><Sep />
      <T className="pl-[5px] tracking-[-0.440px]">1meter = 10px, X=1055, Y=879</T>
    </div>
  );
}

const taskIcons: { on: boolean; ic: React.ReactNode; active?: boolean }[] = [
  { on: false, ic: <path d="M5 3h14v18H5zM2 6v12M22 6v12" stroke="#ddd" strokeWidth="1.500" fill="none" /> },
  { on: true, ic: <path d="M2 11C3 4 8 1 13 1c6 0 10 5 9 12H9c0 5 7 7 12 3v5C14 25 4 23 4 14c0-3 2-6 6-7-4 0-6 2-8 4zM9 9h7c0-5-7-4-7 0z" fill="#0b7de3" /> },
  { on: false, ic: <><path d="M3 7h18l-1 16H4z" fill="#f4f4f4" /><path d="M8 7c0-7 8-7 8 0" stroke="#f4f4f4" strokeWidth="2" fill="none" /><path d="M7 11l4-1v4H7zM12 10l5-1v5h-5zM7 15h4v4l-4-1zM12 15h5v5l-5-1z" fill="#111" /></> },
  { on: true, ic: <><path d="M2 3h8l2 3h10v15H2z" fill="#f0c850" /><path d="M2 9h20v12H2z" fill="#fbe08a" /><path d="M6 22v-7h12v7h-3v-4H9v4z" fill="#3d9fe0" /></> },
  { on: false, ic: <><path d="M1 2h22v16H1z" fill="#2aa0d8" stroke="#eef" strokeWidth="1.500" /><path d="M2 10h20v7H2z" fill="#0d5f92" /><text x="4" y="12" fontSize="5" fill="#fff" textLength="16">Lenovo</text><path d="M9 19h6l3 4H6z" fill="#ccd" /></> },
  { on: false, ic: <><path d="M4 17V12a8 8 0 0 1 16 0v5" stroke="#f0a125" strokeWidth="3" fill="none" /><path d="M5 13h4v9H5zM15 13h4v9h-4z" fill="#555" stroke="#d58b25" /><path d="M11 13v8M13 13v8" stroke="#eda33a" /></> },
  { on: false, ic: <><path d="M1 0h22v24H1z" fill="#f3f3f3" /><path d="M2 1h20v16H2z" fill="#dd1b22" /><path d="M5 15L10 3h4l5 12h-4l-3-8-2 5h3l1 3z" fill="#fff" /><text x="4" y="23" fontSize="6" fontWeight="bold" fill="#111" textLength="16">Adobe</text></> },
  { on: true, ic: <><circle cx="12" cy="12" r="11" fill="#fbc92e" /><path d="M12 12L2.500 6.500A11 11 0 0 1 21.500 7H12z" fill="#e33b2e" /><path d="M2.500 6.500A11 11 0 0 0 11 23l5-8-8 0z" fill="#30a04e" /><circle cx="12" cy="12" r="5.200" fill="#fff" /><circle cx="12" cy="12" r="4.100" fill="#4285f4" /></> },
  { on: false, ic: <><path d="M11 6h12v13H11z" fill="#2a8dd5" /><path d="M12 8l5 4 5-4v9H12z" fill="#fff" /><path d="M1 4l13-2v20L1 20z" fill="#0a66b7" /><ellipse cx="7.500" cy="12" rx="3" ry="3.500" stroke="#fff" strokeWidth="2" fill="none" /></> },
  { on: true, ic: <><path d="M12 4h10v16H12z" fill="#fff" stroke="#2b579a" /><path d="M15 8h6M15 11h6M15 14h6M15 17h6" stroke="#2b579a" /><path d="M1 4l13-2v20L1 20z" fill="#2b579a" /><path d="M4 8l2 8 2-7 2 7 2-8" stroke="#fff" strokeWidth="1.700" fill="none" /></> },
  { on: true, active: true, ic: <><path d="M0 0h24v24H0z" fill="#0e9ddd" /><path d="M3 17L11 4l2 14 5-8 5 5" stroke="#fff" strokeWidth="2" fill="none" /><path d="M6 18l8-7" stroke="#fff" strokeWidth="2" /></> },
  { on: true, ic: <><path d="M7 2l14 2-3 18-15-2z" fill="#8ecbd3" /><path d="M7 2l14 2-.5 3-14-2z" fill="#dbe9ea" /><path d="M14 22l4 0 2-13-6 11z" fill="#e8eef0" /><path d="M5 17l9 1M6 13l9 1M7 10l9 1" stroke="#5ca6b3" /></> },
];

function Taskbar() {
  return (
    <div className="h-[33px] bg-linear-to-r from-[#0a0606] via-[#17100d] to-[#080505] flex items-stretch text-[#eee]">
      <div className="w-[40px] bg-black flex items-center justify-center"><Ic className="w-[15px] h-[15px]"><path d="M1 3l6-1v5.500H1zM8 2l7-1v6.500H8zM1 8.500h6V14l-6-1zM8 8.500h7V15l-7-1z" fill="#fff" /></Ic></div>
      <div className="w-[276px] bg-[#333] flex items-center pl-[7px]">
        <div className="w-[19px] h-[19px] rounded-full border-[2.500px] border-white shrink-0" />
        <T className="pl-[4px] text-[11.500px] text-[#a2a2a2] tracking-[-0.200px]">Ask me anything</T>
        <Ic className="w-[14px] h-[15px] ml-auto"><path d="M6 1h4v9H6zM3 7v5h10V7M8 12v4" stroke="#aaa" strokeWidth="1.200" /></Ic>
      </div>
      <div className="flex pl-[10px]">
        {taskIcons.map((t, i) => (
          <div key={i} className="w-[41.430px] flex justify-center">
            <div className={"w-[35px] flex flex-col items-center justify-between " + (t.active ? "bg-[#393330]" : "")}>
              <svg viewBox="0 0 24 24" className={"mt-[7px] " + (i === 0 ? "w-[17px] h-[18px]" : "w-[19px] h-[19px]")}>{t.ic}</svg>
              {t.on && <div className={"h-[2px] bg-[#76d5ec] " + (t.active ? "w-[35px]" : "w-[29px]")} />}
            </div>
          </div>
        ))}
      </div>
      <div className="ml-auto flex items-center">
        <Ic className="w-[13px] h-[13px]"><path d="M2 11l6-6 6 6" stroke="#eee" strokeWidth="1.500" /></Ic>
        <svg viewBox="0 0 20 12" className="w-[21px] h-[13px] ml-[14px]" fill="none" stroke="#ddd"><rect x=".5" y=".5" width="19" height="11" /><path d="M3 3.500h14M3 6h14" strokeDasharray="1.500 1" /><path d="M5 9h10" /></svg>
        <div className="w-[62px] ml-[4px] text-center text-[10.200px] leading-[15px] tracking-[-0.350px]"><div>3:16 PM</div><div>4/20/2017</div></div>
        <svg viewBox="0 0 20 20" className="w-[22px] h-[22px] ml-[4px] mr-[10px]"><path d="M1 2h14v11H7l-3 3v-3H1z" fill="#fff" /><path d="M4 5h8M4 7.500h8M4 10h5" stroke="#333" /><circle cx="14" cy="14" r="5.500" fill="#333" stroke="#888" /><text x="14" y="17" fontSize="8" fill="#fff" textAnchor="middle">2</text></svg>
        <div className="w-px h-[33px] bg-[#444] mr-[2px]" />
      </div>
    </div>
  );
}

export default function App() {
  return (
    <div className="w-[1280px] h-[720px] overflow-hidden flex flex-col bg-[#f0f0f0] font-['Noto_Sans',sans-serif] text-[#222] [text-rendering:geometricPrecision]">
      <div className="h-[35px] shrink-0 bg-white flex justify-between relative">
        <div>
          <div className="h-[19px] flex items-center gap-[2px] pl-[2px] text-[10.400px] tracking-[-0.510px]"><Logo /><T className="pt-[3px]">AnyLogic Personal Learning Edition [PERSONAL LEARNING USE ONLY]</T></div>
          <div className="h-[17px] flex items-center pl-[5px] gap-[9.500px] text-[10.500px] tracking-[-0.300px]">{["File", "Edit", "View", "Draw", "Model", "Tools", "Help"].map((m) => <T key={m} className="pt-[3px]">{m}</T>)}</div>
        </div>
        <div className="absolute left-[756px] top-[13px] text-[20.800px] leading-[26px] tracking-[0.350px] whitespace-nowrap text-black font-['Lato',sans-serif]">UCF 5<sup className="text-[13.500px] top-[-7px]">th</sup> Floor Hitt Library</div>
        <div className="flex gap-[30px] pr-[16px] pt-[4px]">
          <Ic className="w-[10px] h-[10px]"><path d="M1 8h14" stroke="#222" strokeWidth="1.500" /></Ic>
          <Ic className="w-[10px] h-[10px]"><path d="M1 4h11v11H1zM4 4V1h11v11h-3" stroke="#222" strokeWidth="1.500" /></Ic>
          <Ic className="w-[10px] h-[10px]"><path d="M1 1l14 14M15 1L1 15" stroke="#222" strokeWidth="1.500" /></Ic>
        </div>
      </div>
      <Toolbar />
      <div className="h-[612px] shrink-0 flex">
        <Palette />
        <Editor />
        <Properties />
      </div>
      <Status />
      <Taskbar />
    </div>
  );
}
